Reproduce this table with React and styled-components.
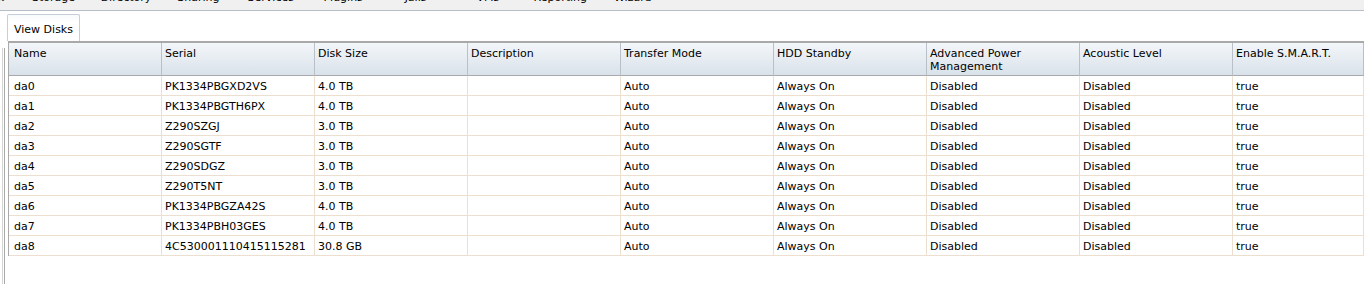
import React from "react";
import styled, { createGlobalStyle } from "styled-components";

const GlobalStyle = createGlobalStyle`
  html, body {
    margin: 0;
    padding: 0;
    background: #ffffff;
  }
  body {
    font-family: "DejaVu Sans", Verdana, sans-serif;
    font-size: 11px;
    color: #000;
    overflow: hidden;
  }
`;

const Page = styled.div`
  width: 1364px;
  height: 284px;
  display: flex;
  flex-direction: column;
  overflow: hidden;
`;

const MenuBar = styled.nav`
  height: 10px;
  flex: none;
  background: #f0f0f0;
  border-bottom: 1px solid #b6bdc8;
  overflow: hidden;
`;

/* the menu is scrolled so that only the lower part of its labels shows */
const MenuRow = styled.div`
  display: flex;
  margin-top: -9px;
  margin-left: -55px;
  line-height: 13px;
`;

const MenuItem = styled.span`
  flex: none;
  width: 72.4px;
  text-align: center;
  color: #000;
  white-space: nowrap;
`;

const Body = styled.div`
  flex: 1;
  display: flex;
  min-height: 0;
`;

const Splitter = styled.div`
  width: 8px;
  flex: none;
  display: flex;
  gap: 1px;
  padding: 37px 0 0 2px;
  box-sizing: border-box;
`;

const SplitLine = styled.div`
  width: 1px;
  background: ${(p) => p.$tone};
`;

const Main = styled.div`
  flex: 1;
  display: flex;
  flex-direction: column;
  min-width: 0;
`;

const TabStrip = styled.div`
  height: 30px;
  display: flex;
  align-items: flex-end;
`;

const Tab = styled.div`
  height: 27px;
  box-sizing: border-box;
  padding: 3px 6px 0;
  display: flex;
  align-items: center;
  border: 1px solid #c6ced8;
  border-bottom: none;
  border-radius: 2px 2px 0 0;
  background: linear-gradient(#f7f9fb, #ffffff 30%);
  margin-left: -1px;
`;

const Grid = styled.div`
  display: grid;
  grid-template-columns: repeat(8, 153px) 1fr;
  border-left: 1px solid #a9a9a9;
  border-top: 2px solid #a9a9a9;
`;

const HeadCell = styled.div`
  box-sizing: border-box;
  height: 33px;
  padding: 4px 4px 0 ${(p) => (p.$first ? "5px" : "3px")};
  line-height: 13px;
  background: linear-gradient(#f3f6f9, #d9e2ea);
  border-right: 1px solid #b9c0c7;
  border-bottom: 1px solid #a9a9a9;
`;

const Cell = styled.div`
  box-sizing: border-box;
  height: 20px;
  padding: 2px 0 0 ${(p) => (p.$first ? "5px" : "3px")};
  line-height: 17px;
  border-right: 1px solid #ecdfd0;
  border-bottom: 1px solid #ecdfd0;
  white-space: nowrap;
  overflow: hidden;
`;

const menu = [
  "Network",
  "Storage",
  "Directory",
  "Sharing",
  "Services",
  "Plugins",
  "Jails",
  "VMs",
  "Reporting",
  "Wizard",
];

const columns = [
  "Name",
  "Serial",
  "Disk Size",
  "Description",
  "Transfer Mode",
  "HDD Standby",
  ["Advanced Power", "Management"],
  "Acoustic Level",
  "Enable S.M.A.R.T.",
];

const disks = [
  ["da0", "PK1334PBGXD2VS", "4.0 TB"],
  ["da1", "PK1334PBGTH6PX", "4.0 TB"],
  ["da2", "Z290SZGJ", "3.0 TB"],
  ["da3", "Z290SGTF", "3.0 TB"],
  ["da4", "Z290SDGZ", "3.0 TB"],
  ["da5", "Z290T5NT", "3.0 TB"],
  ["da6", "PK1334PBGZA42S", "4.0 TB"],
  ["da7", "PK1334PBH03GES", "4.0 TB"],
  ["da8", "4C530001110415115281", "30.8 GB"],
];

export default function App() {
  return (
    <Page>
      <GlobalStyle />
      <MenuBar>
        <MenuRow>
          {menu.map((m) => (
            <MenuItem key={m}>{m}</MenuItem>
          ))}
        </MenuRow>
      </MenuBar>
      <Body>
        <Splitter>
          <SplitLine $tone="#d4d4d4" />
          <SplitLine $tone="#a8a8a8" />
        </Splitter>
        <Main>
          <TabStrip>
            <Tab>View Disks</Tab>
          </TabStrip>
          <Grid>
            {columns.map((c, i) => (
              <HeadCell key={i} $first={i === 0}>
                {Array.isArray(c) ? (
                  <>
                    {c[0]}
                    <br />
                    {c[1]}
                  </>
                ) : (
                  c
                )}
              </HeadCell>
            ))}
            {disks.map(([name, serial, size]) => (
              <React.Fragment key={name}>
                <Cell $first>{name}</Cell>
                <Cell>{serial}</Cell>
                <Cell>{size}</Cell>
                <Cell />
                <Cell>Auto</Cell>
                <Cell>Always On</Cell>
                <Cell>Disabled</Cell>
                <Cell>Disabled</Cell>
                <Cell>true</Cell>
              </React.Fragment>
            ))}
          </Grid>
        </Main>
      </Body>
    </Page>
  );
}
